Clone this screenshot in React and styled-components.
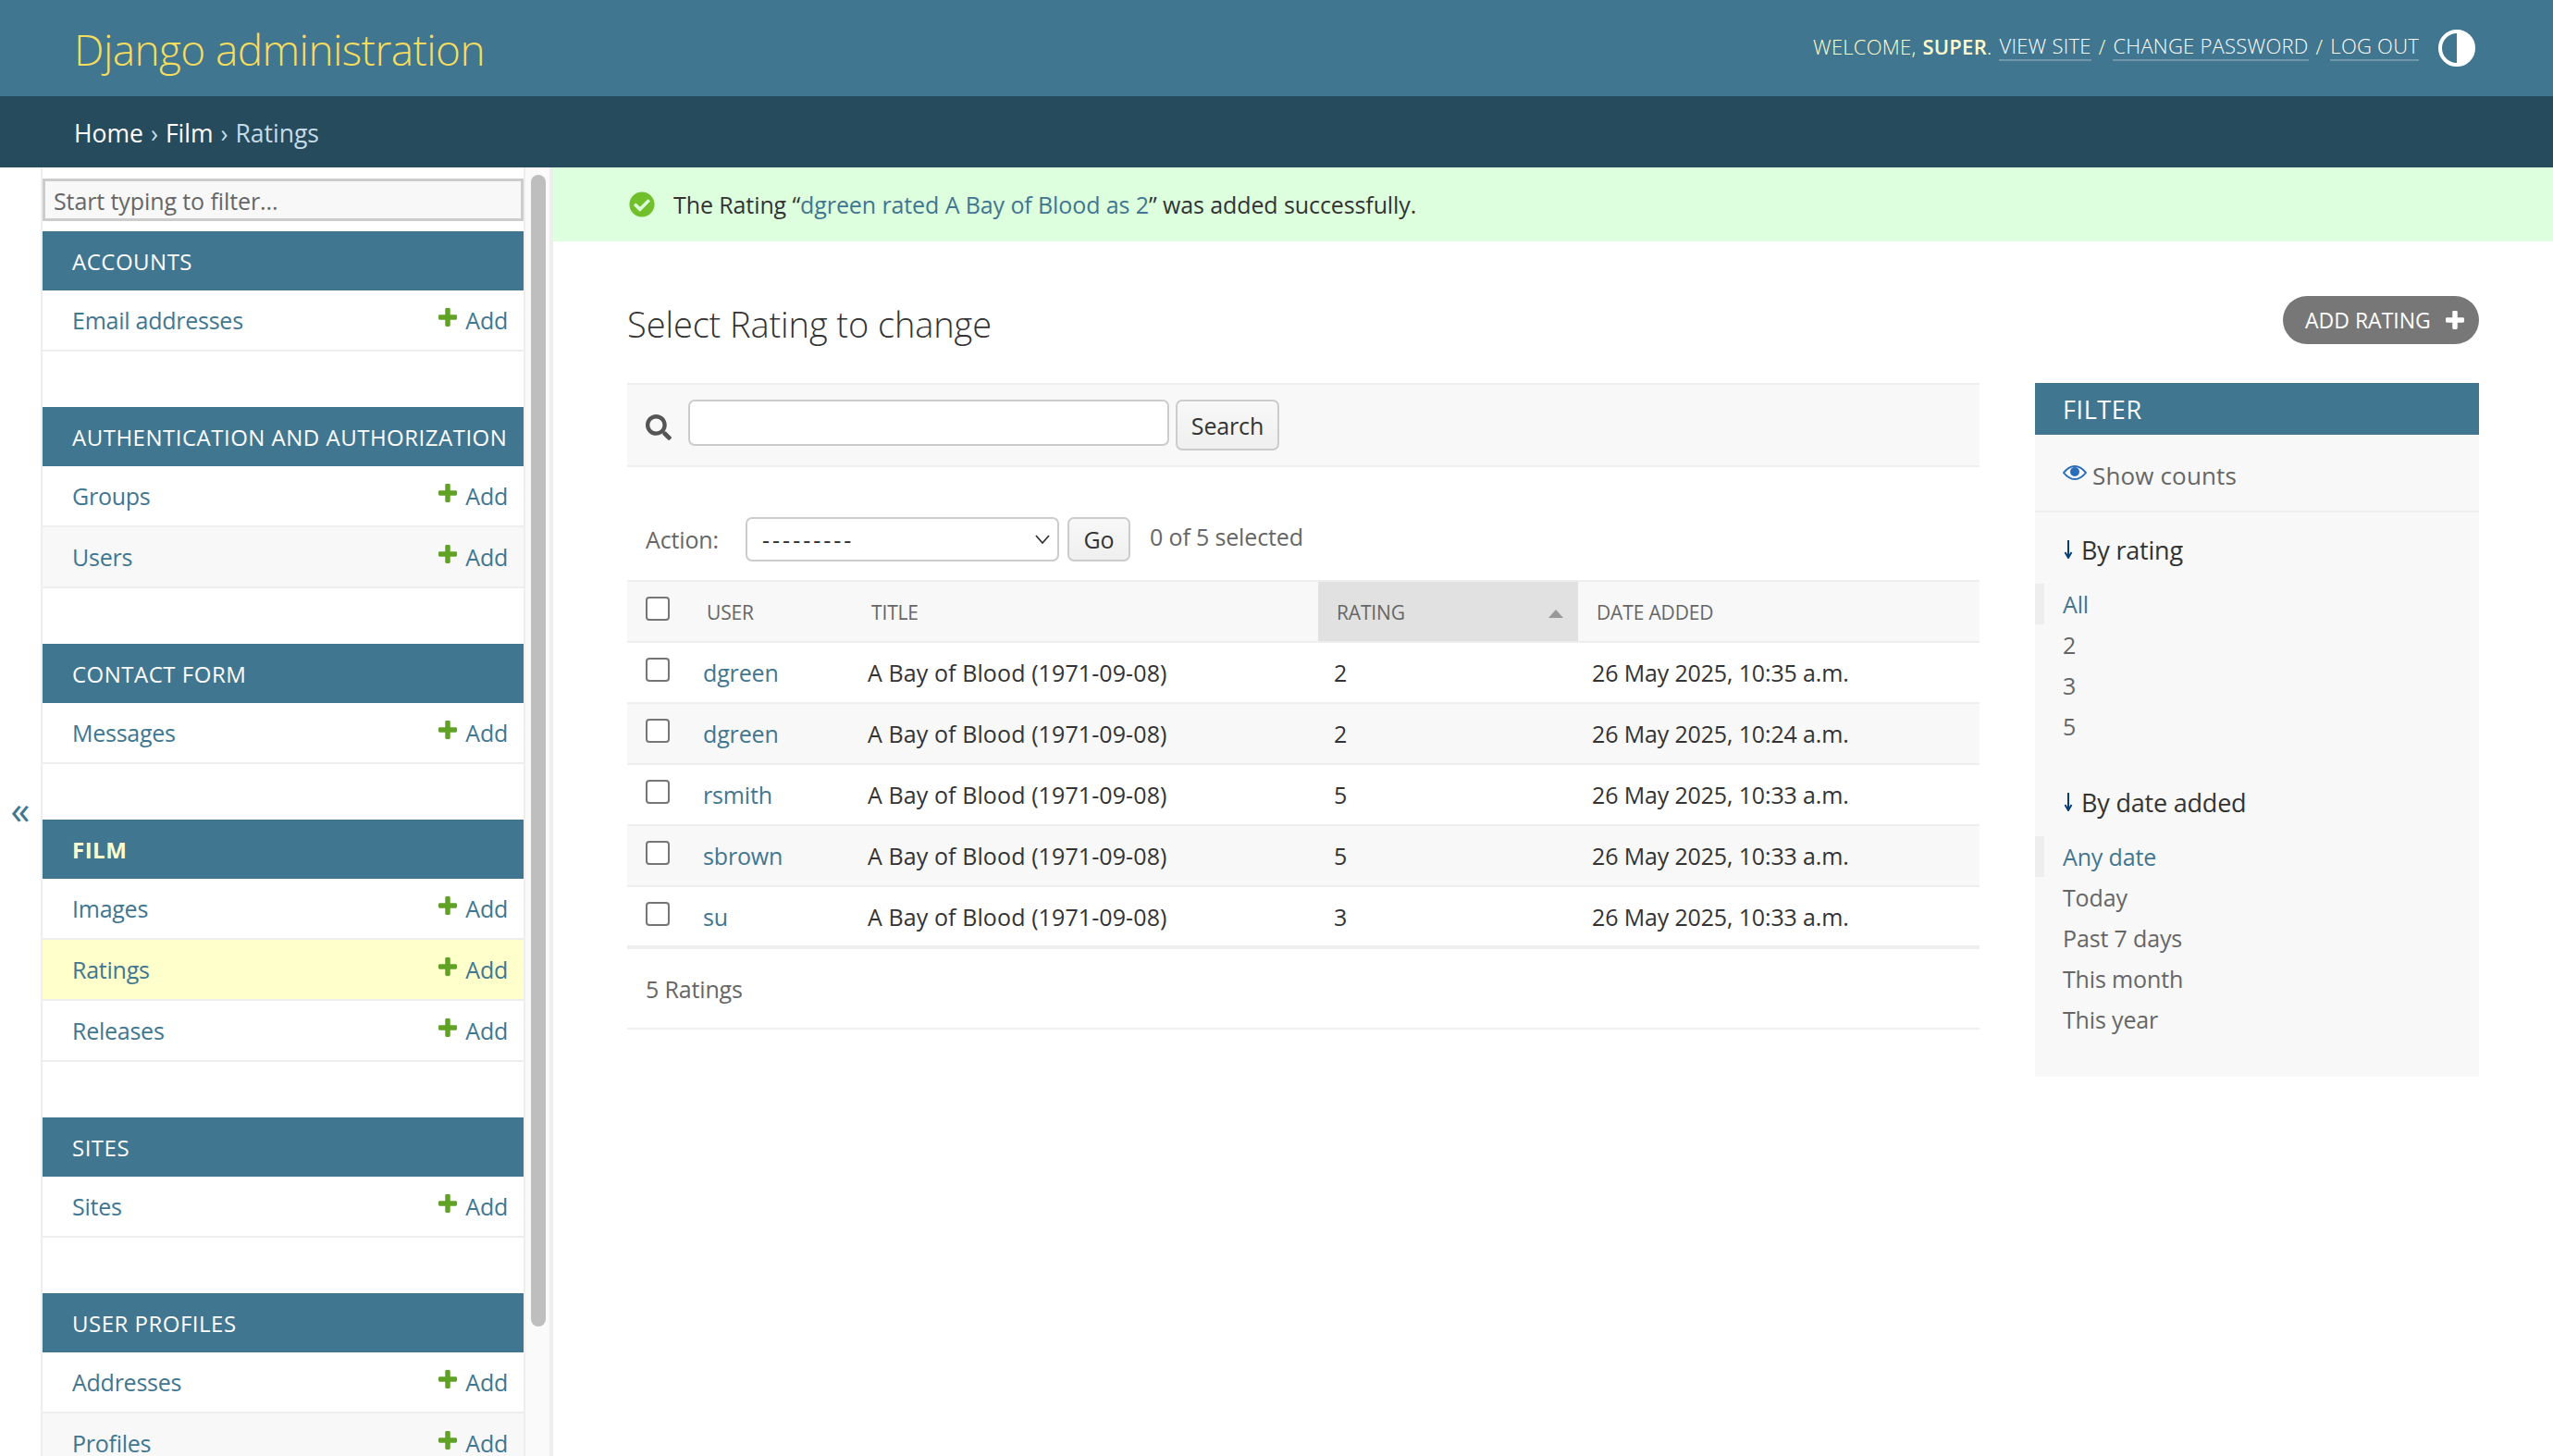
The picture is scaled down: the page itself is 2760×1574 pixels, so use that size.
import React from 'react';
import styled, { createGlobalStyle } from 'styled-components';
import { FaCheckCircle, FaSearch } from 'react-icons/fa';

const GlobalStyle = createGlobalStyle`
  html, body {
    margin: 0;
    padding: 0;
    height: 100%;
    overflow: hidden;
    background: #fff;
    color: #333;
    font-family: "Open Sans", "Noto Sans", "Liberation Sans", sans-serif;
    font-size: 25px;
    letter-spacing: -0.15px;
  }
  * { box-sizing: border-box; }
`;

const Page = styled.div`
  display: flex;
  flex-direction: column;
  height: 1574px;
  overflow: hidden;
`;

const Header = styled.header`
  display: flex;
  justify-content: space-between;
  align-items: center;
  height: 104px;
  padding: 0 84px 0 80px;
  background: #417690;
`;

const Branding = styled.a`
  margin-top: 2px;
  font-size: 46px;
  font-weight: 300;
  letter-spacing: -0.6px;
  color: #f5dd5d;
`;

const UserTools = styled.div`
  display: flex;
  align-items: center;
`;

const UserLinks = styled.div`
  display: flex;
  align-items: center;
  margin-bottom: 5px;
  font-size: 22px;
  font-weight: 300;
  letter-spacing: 0.25px;
  text-transform: uppercase;
  color: #ffc;
`;

const UserName = styled.strong`
  font-weight: 600;
  margin-left: 7px;
`;

const UserLink = styled.a`
  color: #fff;
  border-bottom: 2px solid rgba(255, 255, 255, 0.25);
  margin: 0 8px;
  &:last-of-type { margin-right: 0; }
`;

const ThemeToggle = styled.button`
  display: flex;
  width: 40px;
  height: 40px;
  margin-left: 21px;
  padding: 0;
  border: 0;
  background: none;
`;

const Breadcrumbs = styled.div`
  display: flex;
  align-items: center;
  gap: 8px;
  height: 77px;
  padding: 2px 0 0 80px;
  background: #264b5d;
  color: #c4dce8;
  font-size: 26.5px;
  letter-spacing: 0;
`;

const Crumb = styled.a`
  color: #fff;
`;

const Body = styled.div`
  display: flex;
  flex: 1;
  min-height: 0;
`;

const ToggleColumn = styled.button`
  display: flex;
  align-items: center;
  justify-content: center;
  width: 44px;
  padding: 0 0 6px;
  border: 0;
  background: #fff;
  color: #417690;
  font-family: "Open Sans", sans-serif;
  font-size: 42px;
  line-height: 1;
`;

const Sidebar = styled.aside`
  display: flex;
  flex: none;
  width: 554px;
  border-left: 2px solid #eee;
  border-right: 4px solid #eee;
`;

const NavColumn = styled.nav`
  flex: none;
  width: 522px;
  padding-top: 12px;
  border-right: 2px solid #eee;
  overflow: hidden;
`;

const NavFilter = styled.input`
  display: block;
  width: 520px;
  height: 46px;
  margin-bottom: 11px;
  padding: 2px 9px 0;
  border: 3px solid #ccc;
  background: #f8f8f8;
  font: inherit;
  letter-spacing: -0.1px;
  color: #333;
  outline: none;
  &::placeholder { color: #666; opacity: 1; }
`;

const Module = styled.section`
  margin-bottom: 60px;
`;

const Caption = styled.h2`
  display: flex;
  align-items: center;
  height: 64px;
  margin: 0;
  padding-left: 32px;
  background: #417690;
  color: ${(props) => (props.$current ? '#ffc' : '#fff')};
  font-size: 24px;
  font-weight: ${(props) => (props.$current ? 700 : 400)};
  letter-spacing: 0.5px;
  text-transform: uppercase;
`;

const ModelRow = styled.div`
  display: flex;
  justify-content: space-between;
  align-items: center;
  height: 66px;
  padding: 0 17px 0 32px;
  border-bottom: 2px solid #eee;
  background: ${(props) => (props.$current ? '#ffc' : props.$alt ? '#f8f8f8' : '#fff')};
  letter-spacing: -0.25px;
`;

const Link = styled.a`
  color: #417690;
`;

const AddLink = styled.a`
  display: flex;
  align-items: center;
  gap: 9px;
  color: #417690;
`;

const PlusMark = styled.svg.attrs({ viewBox: '192 192 1408 1408' })`
  flex: none;
  width: 20px;
  height: 20px;
  margin-top: ${(props) => props.$lift}px;
  fill: ${(props) => props.$color};
`;

const Plus = ({ color, lift = 0 }) => (
  <PlusMark $color={color} $lift={lift}>
    <path d="M1600 796v192q0 40-28 68t-68 28h-416v416q0 40-28 68t-68 28h-192q-40 0-68-28t-28-68v-416h-416q-40 0-68-28t-28-68v-192q0-40 28-68t68-28h416v-416q0-40 28-68t68-28h192q40 0 68 28t28 68v416h416q40 0 68 28t28 68z" />
  </PlusMark>
);

const SideTrack = styled.div`
  flex: 1;
  padding: 8px 4px 0 6px;
  background: #fafafa;
`;

const SideThumb = styled.div`
  height: 1245px;
  border-radius: 8px;
  background: #bebebe;
`;

const Main = styled.main`
  flex: 1;
  min-width: 0;
`;

const Message = styled.div`
  display: flex;
  align-items: center;
  gap: 20px;
  height: 80px;
  padding-left: 82px;
  background: #dfd;
  letter-spacing: -0.1px;
`;

const SuccessIcon = styled(FaCheckCircle)`
  width: 28px;
  height: 28px;
  color: #70bf2b;
`;

const Content = styled.div`
  padding: 59px 80px 0 80px;
`;

const TitleRow = styled.div`
  display: flex;
  justify-content: space-between;
  align-items: center;
  height: 52px;
  margin-bottom: 42px;
`;

const Title = styled.h1`
  margin: 8px 0 0;
  font-size: 38px;
  font-weight: 300;
  letter-spacing: -0.1px;
  color: #333;
`;

const AddButton = styled.a`
  display: flex;
  align-items: center;
  gap: 16px;
  width: 212px;
  height: 52px;
  padding-left: 24px;
  border-radius: 26px;
  background: #777;
  color: #fff;
  font-size: 23px;
  letter-spacing: 0;
  text-transform: uppercase;
`;

const Columns = styled.div`
  display: flex;
  gap: 60px;
  align-items: flex-start;
`;

const ChangeList = styled.div`
  flex: none;
  width: 1462px;
`;

const Toolbar = styled.div`
  display: flex;
  align-items: flex-start;
  height: 91px;
  padding: 16px 0 0 20px;
  border-top: 2px solid #eee;
  border-bottom: 2px solid #eee;
  background: #f8f8f8;
`;

const SearchIcon = styled(FaSearch)`
  width: 28px;
  height: 28px;
  margin: 16px 18px 0 0;
  color: #555;
`;

const SearchInput = styled.input`
  width: 520px;
  height: 50px;
  margin-right: 7px;
  border: 2px solid #ccc;
  border-radius: 7px;
  background: #fff;
  outline: none;
`;

const SmallButton = styled.button`
  width: ${(props) => props.$width}px;
  height: ${(props) => props.$height}px;
  padding: 0;
  border: 2px solid #ccc;
  border-radius: 7px;
  background: linear-gradient(#f8f8f8, #efefef);
  color: #333;
  font: inherit;
  letter-spacing: -0.15px;
`;

const Actions = styled.div`
  display: flex;
  align-items: flex-start;
  height: 122px;
  padding: 54px 0 0 20px;
  color: #666;
`;

const ActionLabel = styled.label`
  width: 108px;
  margin-top: 7px;
`;

const chevron = encodeURIComponent(
  '<svg xmlns="http://www.w3.org/2000/svg" width="18" height="12"><path d="M2 2l7 8 7-8" fill="none" stroke="#333" stroke-width="1.8"/></svg>'
);

const ActionSelect = styled.select`
  width: 339px;
  height: 48px;
  margin-right: 9px;
  padding-left: 16px;
  appearance: none;
  border: 2px solid #ccc;
  border-radius: 7px;
  background: #fff url("data:image/svg+xml,${chevron}") no-repeat right 7px center;
  color: #333;
  font: inherit;
  letter-spacing: 3px;
`;

const SelectedCount = styled.span`
  margin: 4px 0 0 21px;
`;

const Table = styled.table`
  width: 100%;
  table-layout: fixed;
  border-collapse: collapse;
  border-top: 2px solid #eee;
  border-bottom: 4px solid #eee;
`;

const HeadCell = styled.th`
  position: relative;
  width: ${(props) => props.$width}px;
  height: 66px;
  padding: 2px 0 0 ${(props) => props.$pad}px;
  border-bottom: 2px solid #eee;
  background: ${(props) => (props.$sorted ? '#e1e1e1' : '#f8f8f8')};
  color: #666;
  font-size: 21px;
  font-weight: 400;
  letter-spacing: -0.15px;
  text-align: left;
  text-transform: uppercase;
`;

const CheckHeadCell = styled(HeadCell)`
  vertical-align: top;
  padding-top: 16px;
`;

const SortMark = styled.span`
  position: absolute;
  top: 30px;
  right: 16px;
  border-left: 8px solid transparent;
  border-right: 8px solid transparent;
  border-bottom: 9px solid #999;
`;

const Row = styled.tr`
  background: ${(props) => (props.$alt ? '#f8f8f8' : '#fff')};
`;

const Cell = styled.td`
  height: 66px;
  padding: 0 0 0 ${(props) => props.$pad}px;
  border-bottom: 2px solid #eee;
`;

const TitleCell = styled(Cell)`
  letter-spacing: 0.1px;
`;

const CheckCell = styled(Cell)`
  vertical-align: top;
  padding-top: 16px;
`;

const Check = styled.input.attrs({ type: 'checkbox' })`
  display: block;
  width: 26px;
  height: 26px;
  margin: 0;
  appearance: none;
  border: 2px solid #767676;
  border-radius: 4px;
  background: #fff;
`;

const Paginator = styled.div`
  display: flex;
  align-items: center;
  height: 87px;
  padding: 0 0 0 20px;
  border-bottom: 2px solid #eee;
  color: #666;
`;

const FilterPanel = styled.aside`
  flex: none;
  width: 480px;
  height: 750px;
  background: #f8f8f8;
`;

const FilterCaption = styled.h2`
  display: flex;
  align-items: center;
  height: 56px;
  margin: 0;
  padding-left: 30px;
  background: #417690;
  color: #fff;
  font-size: 27px;
  font-weight: 400;
  letter-spacing: 0.6px;
  text-transform: uppercase;
`;

const ShowCounts = styled.div`
  display: flex;
  align-items: center;
  gap: 6px;
  height: 84px;
  padding: 6px 0 0 30px;
  border-bottom: 2px solid #eee;
  color: #666;
  font-size: 26px;
  letter-spacing: 0.15px;
`;

const EyeMark = styled.svg`
  flex: none;
  margin-top: -6px;
`;

const FilterSection = styled.div`
  padding-top: 20px;
  & + & { padding-top: 40px; }
`;

const FilterHeading = styled.h3`
  display: flex;
  align-items: center;
  gap: 9px;
  height: 40px;
  margin: 0 0 17px;
  padding-left: 31px;
  color: #333;
  font-size: 27px;
  font-weight: 400;
  letter-spacing: -0.2px;
`;

const FilterItem = styled.a`
  display: flex;
  align-items: center;
  height: 44px;
  padding-left: ${(props) => (props.$selected ? 20 : 30)}px;
  border-left: ${(props) => (props.$selected ? '10px solid #eee' : '0')};
  color: ${(props) => (props.$selected ? '#417690' : '#666')};
`;

const modules = [
  { name: 'Accounts', models: ['Email addresses'] },
  { name: 'Authentication and Authorization', models: ['Groups', 'Users'] },
  { name: 'Contact Form', models: ['Messages'] },
  { name: 'Film', current: true, models: ['Images', 'Ratings', 'Releases'] },
  { name: 'Sites', models: ['Sites'] },
  { name: 'User Profiles', models: ['Addresses', 'Profiles'] },
];

const ratings = [
  ['dgreen', '2', '26 May 2025, 10:35 a.m.'],
  ['dgreen', '2', '26 May 2025, 10:24 a.m.'],
  ['rsmith', '5', '26 May 2025, 10:33 a.m.'],
  ['sbrown', '5', '26 May 2025, 10:33 a.m.'],
  ['su', '3', '26 May 2025, 10:33 a.m.'],
];

const filters = [
  { title: 'By rating', items: ['All', '2', '3', '5'] },
  { title: 'By date added', items: ['Any date', 'Today', 'Past 7 days', 'This month', 'This year'] },
];

const ContrastIcon = () => (
  <svg viewBox="0 0 40 40" width="40" height="40">
    <circle cx="20" cy="20" r="18" fill="none" stroke="#fff" strokeWidth="4" />
    <path d="M20 2a18 18 0 0 1 0 36z" fill="#fff" />
  </svg>
);

const EyeIcon = () => (
  <EyeMark viewBox="0 0 26 18" width="26" height="18">
    <path d="M1 9C5 4 9 2 13 2s8 2 12 7c-4 5-8 7-12 7S5 14 1 9z" fill="none" stroke="#2a6ebb" strokeWidth="2" />
    <circle cx="13" cy="8" r="5" fill="#2a6ebb" />
  </EyeMark>
);

const ArrowIcon = () => (
  <svg viewBox="0 0 10 20" width="10" height="20">
    <path d="M5 0v18M1.5 13L5 19l3.5-6" fill="none" stroke="#0a3f72" strokeWidth="2" />
  </svg>
);

const App = () => (
  <Page>
    <GlobalStyle />
    <Header>
      <Branding>Django administration</Branding>
      <UserTools>
        <UserLinks>
          Welcome,<UserName>Super</UserName>.
          <UserLink>View site</UserLink>/
          <UserLink>Change password</UserLink>/
          <UserLink>Log out</UserLink>
        </UserLinks>
        <ThemeToggle><ContrastIcon /></ThemeToggle>
      </UserTools>
    </Header>
    <Breadcrumbs>
      <Crumb>Home</Crumb>›<Crumb>Film</Crumb>›<span>Ratings</span>
    </Breadcrumbs>
    <Body>
      <ToggleColumn>«</ToggleColumn>
      <Sidebar>
        <NavColumn>
          <NavFilter placeholder="Start typing to filter..." />
          {modules.map((mod) => (
            <Module key={mod.name}>
              <Caption $current={mod.current}>{mod.name}</Caption>
              {mod.models.map((model, i) => (
                <ModelRow key={model} $current={model === 'Ratings'} $alt={i % 2 === 1 && model !== 'Ratings'}>
                  <Link>{model}</Link>
                  <AddLink><Plus color="#5fa225" lift={-7} />Add</AddLink>
                </ModelRow>
              ))}
            </Module>
          ))}
        </NavColumn>
        <SideTrack><SideThumb /></SideTrack>
      </Sidebar>
      <Main>
        <Message>
          <SuccessIcon />
          <span>The Rating “<Link>dgreen rated A Bay of Blood as 2</Link>” was added successfully.</span>
        </Message>
        <Content>
          <TitleRow>
            <Title>Select Rating to change</Title>
            <AddButton>Add rating<Plus color="#fff" /></AddButton>
          </TitleRow>
          <Columns>
            <ChangeList>
              <Toolbar>
                <SearchIcon />
                <SearchInput />
                <SmallButton $width={112} $height={55}>Search</SmallButton>
              </Toolbar>
              <Actions>
                <ActionLabel>Action:</ActionLabel>
                <ActionSelect defaultValue="">
                  <option value="">---------</option>
                </ActionSelect>
                <SmallButton $width={68} $height={48}>Go</SmallButton>
                <SelectedCount>0 of 5 selected</SelectedCount>
              </Actions>
              <Table>
                <thead>
                  <tr>
                    <CheckHeadCell $width={82} $pad={20}><Check /></CheckHeadCell>
                    <HeadCell $width={177} $pad={4}>User</HeadCell>
                    <HeadCell $width={488} $pad={5}>Title</HeadCell>
                    <HeadCell $width={281} $pad={20} $sorted>Rating<SortMark /></HeadCell>
                    <HeadCell $pad={20}>Date added</HeadCell>
                  </tr>
                </thead>
                <tbody>
                  {ratings.map(([user, rating, date], i) => (
                    <Row key={date + user} $alt={i % 2 === 1}>
                      <CheckCell $pad={20}><Check /></CheckCell>
                      <Cell $pad={0}><Link>{user}</Link></Cell>
                      <TitleCell $pad={1}>A Bay of Blood (1971-09-08)</TitleCell>
                      <Cell $pad={17}>{rating}</Cell>
                      <Cell $pad={15}>{date}</Cell>
                    </Row>
                  ))}
                </tbody>
              </Table>
              <Paginator>5 Ratings</Paginator>
            </ChangeList>
            <FilterPanel>
              <FilterCaption>Filter</FilterCaption>
              <ShowCounts><EyeIcon />Show counts</ShowCounts>
              {filters.map((group) => (
                <FilterSection key={group.title}>
                  <FilterHeading><ArrowIcon />{group.title}</FilterHeading>
                  {group.items.map((item, i) => (
                    <FilterItem key={item} $selected={i === 0}>{item}</FilterItem>
                  ))}
                </FilterSection>
              ))}
            </FilterPanel>
          </Columns>
        </Content>
      </Main>
    </Body>
  </Page>
);

export default App;
